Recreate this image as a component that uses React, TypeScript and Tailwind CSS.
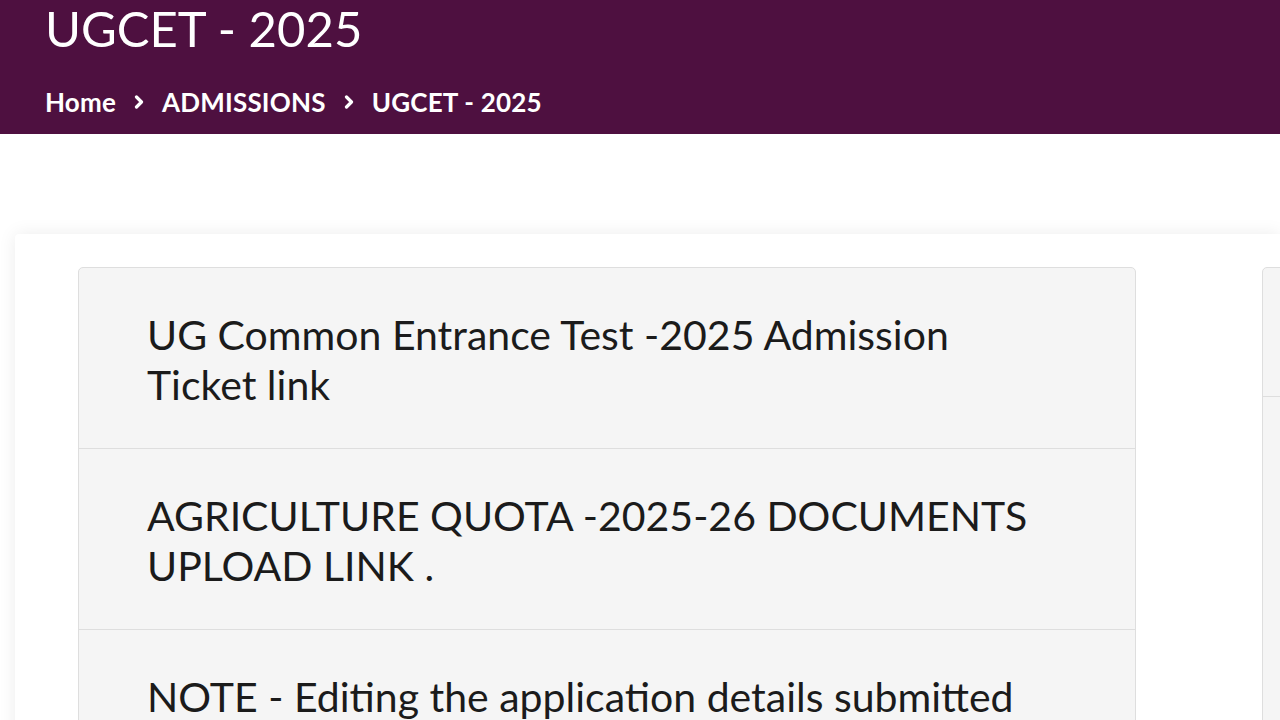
import React from "react";

const rows = [
  "UG Common Entrance Test -2025 Admission Ticket link",
  "AGRICULTURE QUOTA -2025-26 DOCUMENTS UPLOAD LINK .",
  "NOTE - Editing the application details submitted",
];

function Chevron() {
  return (
    <svg width="12" height="14" viewBox="0 0 12 14" className="mx-[17px] shrink-0">
      <path d="M3.5 2 L8.5 7 L3.5 12" fill="none" stroke="white" strokeWidth="3.2" strokeLinecap="round" strokeLinejoin="round" />
    </svg>
  );
}

export default function App() {
  return (
    <div className="w-[1280px] h-[720px] overflow-hidden bg-white font-['Lato','Open_Sans',sans-serif]">
      <header className="h-[134px] bg-[#4e1040] px-[45px] text-white">
        <h1 className="text-[49px] leading-[56px]">UGCET - 2025</h1>
        <nav className="mt-[33px] flex items-center text-[26px] font-bold leading-none tracking-[0.2px]">
          <span>Home</span>
          <Chevron />
          <span>ADMISSIONS</span>
          <Chevron />
          <span>UGCET - 2025</span>
        </nav>
      </header>

      <main className="pt-[100px] pl-[15px]">
        <div className="flex gap-[126px] bg-white pl-[63px] pt-[33px] shadow-[0_0_18px_rgba(0,0,0,0.08)] rounded-tl-[4px]">
          <section className="w-[1058px] shrink-0 rounded-t-[5px] border border-[#dedede] bg-[#f5f5f5]">
            {rows.map((text, i) => (
              <div
                key={i}
                className={`pl-[68px] pr-[92px] pt-[42px] pb-[38px] text-[41px] leading-[50px] text-[#1b1b1b] ${i > 0 ? "border-t border-[#dedede]" : ""}`}
              >
                {text}
              </div>
            ))}
          </section>
          <aside className="w-[300px] shrink-0 rounded-t-[5px] border border-[#dedede] bg-[#f5f5f5]">
            <div className="h-[129px] border-b border-[#dedede]" />
            <div className="h-[400px]" />
          </aside>
        </div>
      </main>
    </div>
  );
}
